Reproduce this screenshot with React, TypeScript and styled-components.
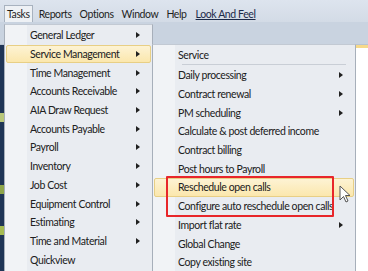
import React from "react";
import styled, { createGlobalStyle } from "styled-components";

const Global = createGlobalStyle`
  html, body { margin: 0; padding: 0; }
  body { width: 368px; height: 271px; overflow: hidden; font-family: "Lato", "Open Sans", sans-serif; }
`;

const Screen = styled.div`
  position: relative;
  width: 368px;
  height: 271px;
  overflow: hidden;
  display: flex;
  flex-direction: column;
  background: #ffffff;
`;

const MenuBar = styled.div`
  height: 22px;
  display: flex;
  align-items: flex-end;
  padding-left: 4px;
  background: linear-gradient(#dde4ee, #d3dbe6);
  font-size: 10.5px;
  letter-spacing: -0.4px;
  color: #1e1e1e;
`;

const BarItem = styled.div<{ $active?: boolean; $link?: boolean }>`
  height: 17px;
  display: flex;
  align-items: center;
  padding: 0 ${(p) => (p.$active ? "2px" : "2px")};
  margin-right: ${(p) => (p.$active ? "3px" : "2px")};
  box-sizing: border-box;
  border: 1px solid ${(p) => (p.$active ? "#a8b2bf" : "transparent")};
  border-bottom: none;
  background: ${(p) => (p.$active ? "#eef1f5" : "transparent")};
  text-decoration: ${(p) => (p.$link ? "underline" : "none")};
  color: ${(p) => (p.$link ? "#1c2a48" : "#1e1e1e")};
  margin-left: ${(p) => (p.$link ? "1px" : "0")};
`;

const Toolbar = styled.div`
  height: 22px;
  background: #c9d3e0;
  border-bottom: 1px solid #b8c3d1;
`;

const Content = styled.div`
  flex: 1;
  display: flex;
`;

const AppStrip = styled.div`
  width: 5px;
  background: linear-gradient(#1f3556 0 30%, #b9c77a 30% 34%, #1f3556 34% 62%, #8fa64a 62% 66%, #1f3556 66% 80%, #a5bb52 80% 84%, #1f3556 84%);
`;

const Canvas = styled.div`
  flex: 1;
  background: #ffffff;
  border-top: 3px solid #f6d98a;
`;

const Menu = styled.div<{ $x: number; $y: number; $w: number }>`
  position: absolute;
  left: ${(p) => p.$x}px;
  top: ${(p) => p.$y}px;
  width: ${(p) => p.$w}px;
  bottom: -4px;
  box-sizing: border-box;
  background: linear-gradient(90deg, #f1f3f6 0 22px, #e9ecf1 22px);
  border: 1px solid #a7afba;
  border-top-color: #c2c9d3;
  padding: 1px 1px;
  display: flex;
  flex-direction: column;
  font-size: 10.5px;
  letter-spacing: -0.4px;
  color: #202020;
`;

const Item = styled.div<{ $hot?: boolean; $h?: number }>`
  position: relative;
  height: ${(p) => p.$h ?? 18.7}px;
  flex: none;
  display: flex;
  align-items: center;
  padding-left: 23px;
  padding-right: 10px;
  box-sizing: border-box;
  border: 1px solid ${(p) => (p.$hot ? "#e8cf85" : "transparent")};
  border-radius: 2px;
  background: ${(p) => (p.$hot ? "linear-gradient(#fdf3d4, #fbe7ad)" : "transparent")};
  white-space: nowrap;
`;

const Label = styled.span`
  flex: 1;
`;

const Arrow = styled.span`
  width: 0;
  height: 0;
  border-top: 3px solid transparent;
  border-bottom: 3px solid transparent;
  border-left: 4px solid #202020;
`;

const Separator = styled.div`
  height: 1px;
  margin: 0 8px 1px 28px;
  background: #c9ced6;
  flex: none;
`;

const Highlight = styled.div`
  position: absolute;
  left: 166px;
  top: 176px;
  width: 168px;
  height: 41px;
  box-sizing: border-box;
  border: 2px solid #e8262a;
  border-radius: 1px;
  pointer-events: none;
`;

const Cursor = styled.svg`
  position: absolute;
  left: 339px;
  top: 185px;
`;

const main = [
  "General Ledger",
  "Service Management",
  "Time Management",
  "Accounts Receivable",
  "AIA Draw Request",
  "Accounts Payable",
  "Payroll",
  "Inventory",
  "Job Cost",
  "Equipment Control",
  "Estimating",
  "Time and Material",
  "Quickview",
];

const sub: { t: string; arrow?: boolean }[] = [
  { t: "Daily processing", arrow: true },
  { t: "Contract renewal", arrow: true },
  { t: "PM scheduling", arrow: true },
  { t: "Calculate & post deferred income" },
  { t: "Contract billing" },
  { t: "Post hours to Payroll" },
  { t: "Reschedule open calls" },
  { t: "Configure auto reschedule open calls" },
  { t: "Import flat rate", arrow: true },
  { t: "Global Change" },
  { t: "Copy existing site" },
];

export default function App() {
  return (
    <>
      <Global />
      <Screen>
        <MenuBar>
          <BarItem $active>Tasks</BarItem>
          <BarItem>Reports</BarItem>
          <BarItem>Options</BarItem>
          <BarItem>Window</BarItem>
          <BarItem>Help</BarItem>
          <BarItem $link>Look And Feel</BarItem>
        </MenuBar>
        <Toolbar />
        <Content>
          <AppStrip />
          <Canvas />
        </Content>

        <Menu $x={4} $y={24} $w={149}>
          {main.map((m) => (
            <Item key={m} $hot={m === "Service Management"}>
              <Label>{m}</Label>
              {m !== "Quickview" && <Arrow />}
            </Item>
          ))}
        </Menu>

        <Menu $x={152} $y={44} $w={204}>
          <Item $h={18}>
            <Label>Service</Label>
          </Item>
          <Separator />
          {sub.map((s) => (
            <Item key={s.t} $hot={s.t === "Reschedule open calls"}>
              <Label>{s.t}</Label>
              {s.arrow && <Arrow />}
            </Item>
          ))}
        </Menu>

        <Highlight />
        <Cursor width="12" height="19" viewBox="0 0 12 19">
          <path d="M1 1 L1 15 L4.5 11.5 L7 17 L9 16 L6.5 10.5 L11 10.5 Z" fill="#ffffff" stroke="#555" strokeWidth="1" strokeLinejoin="round" />
        </Cursor>
      </Screen>
    </>
  );
}
